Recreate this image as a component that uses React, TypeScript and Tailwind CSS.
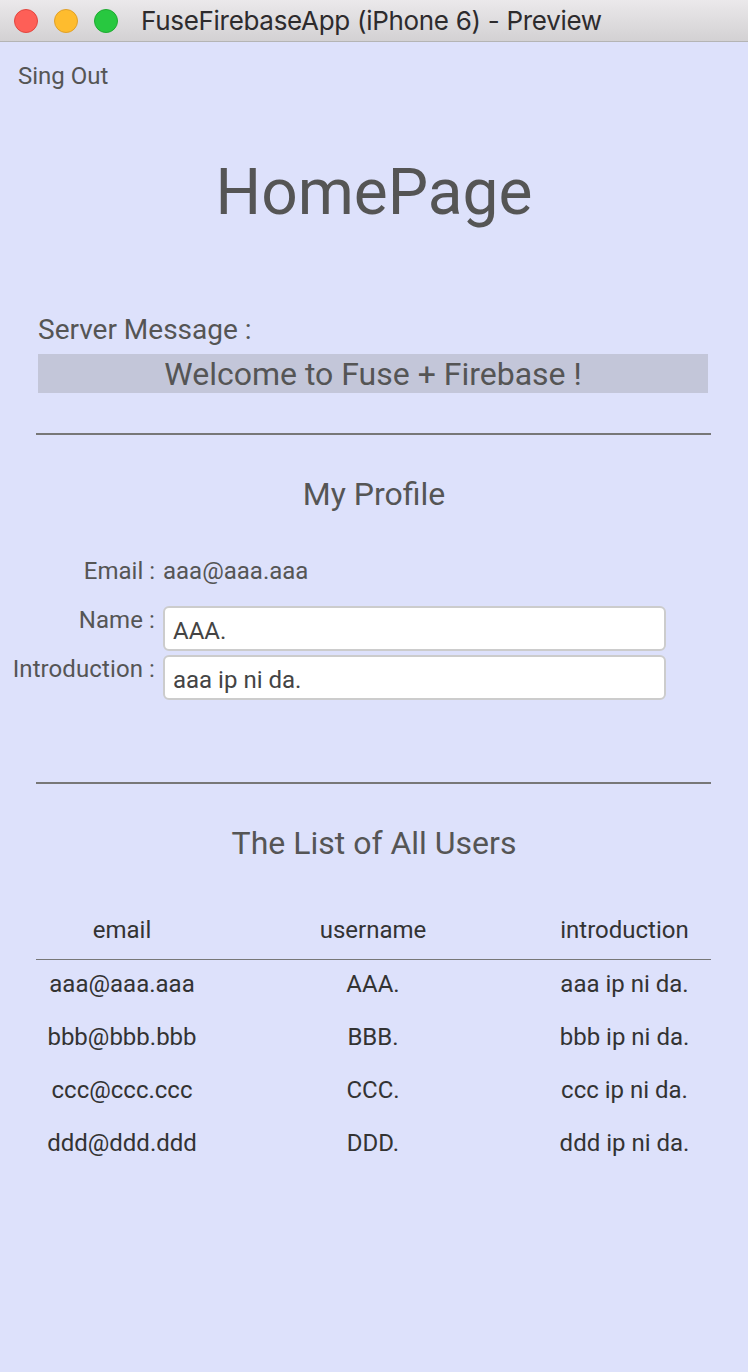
import React from "react";

type User = { email: string; username: string; introduction: string };

const USERS: User[] = [
  { email: "aaa@aaa.aaa", username: "AAA.", introduction: "aaa ip ni da." },
  { email: "bbb@bbb.bbb", username: "BBB.", introduction: "bbb ip ni da." },
  { email: "ccc@ccc.ccc", username: "CCC.", introduction: "ccc ip ni da." },
  { email: "ddd@ddd.ddd", username: "DDD.", introduction: "ddd ip ni da." },
];

const TitleBar: React.FC = () => (
  <div className="h-[42px] flex items-center bg-gradient-to-b from-[#ebe9eb] to-[#d3d1d3] border-b border-[#b4b4b4] font-['Inter',sans-serif]">
    <div className="flex items-center gap-[16px] pl-[14px]">
      <span className="w-[24px] h-[24px] rounded-full bg-[#fe5f57] border border-[#e2463f]" />
      <span className="w-[24px] h-[24px] rounded-full bg-[#febc2e] border border-[#e0a028]" />
      <span className="w-[24px] h-[24px] rounded-full bg-[#28c840] border border-[#1eab31]" />
    </div>
    <div className="ml-[23px] text-[26px] leading-none text-[#2d2b2d] tracking-[-0.3px]">
      FuseFirebaseApp (iPhone 6) - Preview
    </div>
  </div>
);

const Divider: React.FC<{ className?: string }> = ({ className }) => (
  <div className={["ml-[36px] mr-[37px] h-[2px] bg-[#777777]", className].join(" ")} />
);

const Field: React.FC<{ label: string; value: string }> = ({ label, value }) => (
  <div className="grid grid-cols-[155px_503px] gap-x-[8px]">
    <div className="text-right text-[24px] leading-[28px] tracking-[0.1px]">{label}</div>
    <div className="h-[45px] rounded-[6px] border-2 border-[#cccccc] bg-white px-[8px] flex items-center text-[24px] text-[#444] pt-[4px]">
      {value}
    </div>
  </div>
);

export default function App() {
  return (
    <div className="w-[748px] min-h-[1372px] bg-[#dde1fb] text-[#555555] font-['Roboto',sans-serif]">
      <TitleBar />

      <div className="pl-[18px] pt-[20px] text-[24px] leading-[28px]">Sing Out</div>

      <h1 className="mt-[71px] text-center text-[64px] leading-[64px]">HomePage</h1>

      <div className="mt-[89px] ml-[38px] text-[28px] leading-[32px]">Server Message :</div>
      <div className="mt-[8px] ml-[38px] mr-[40px] h-[39px] bg-[#c3c6d9] flex items-center justify-center text-[32px]">
        Welcome to Fuse + Firebase !
      </div>

      <Divider className="mt-[40px]" />

      <h2 className="mt-[41px] text-center text-[32px] leading-[36px]">My Profile</h2>

      <div className="mt-[45px] grid grid-cols-[155px_auto] gap-x-[8px] text-[24px] leading-[28px]">
        <div className="text-right">Email :</div>
        <div>aaa@aaa.aaa</div>
      </div>

      <div className="mt-[21px] flex flex-col gap-[4px]">
        <Field label="Name :" value="AAA." />
        <Field label="Introduction :" value="aaa ip ni da." />
      </div>

      <Divider className="mt-[82px]" />

      <h2 className="mt-[41px] text-center text-[32px] leading-[36px]">The List of All Users</h2>

      <div className="mt-[55px] ml-[36px] mr-[37px] text-[24px] leading-[28px] text-[#333333]">
        <div className="grid grid-cols-[172px_1fr_173px] pb-[15px] border-b border-[#777777] text-center">
          <div>email</div>
          <div>username</div>
          <div>introduction</div>
        </div>
        <div className="pt-[10px] flex flex-col gap-[25px]">
          {USERS.map((u) => (
            <div key={u.email} className="grid grid-cols-[172px_1fr_173px] text-center">
              <div>{u.email}</div>
              <div>{u.username}</div>
              <div>{u.introduction}</div>
            </div>
          ))}
        </div>
      </div>
    </div>
  );
}
